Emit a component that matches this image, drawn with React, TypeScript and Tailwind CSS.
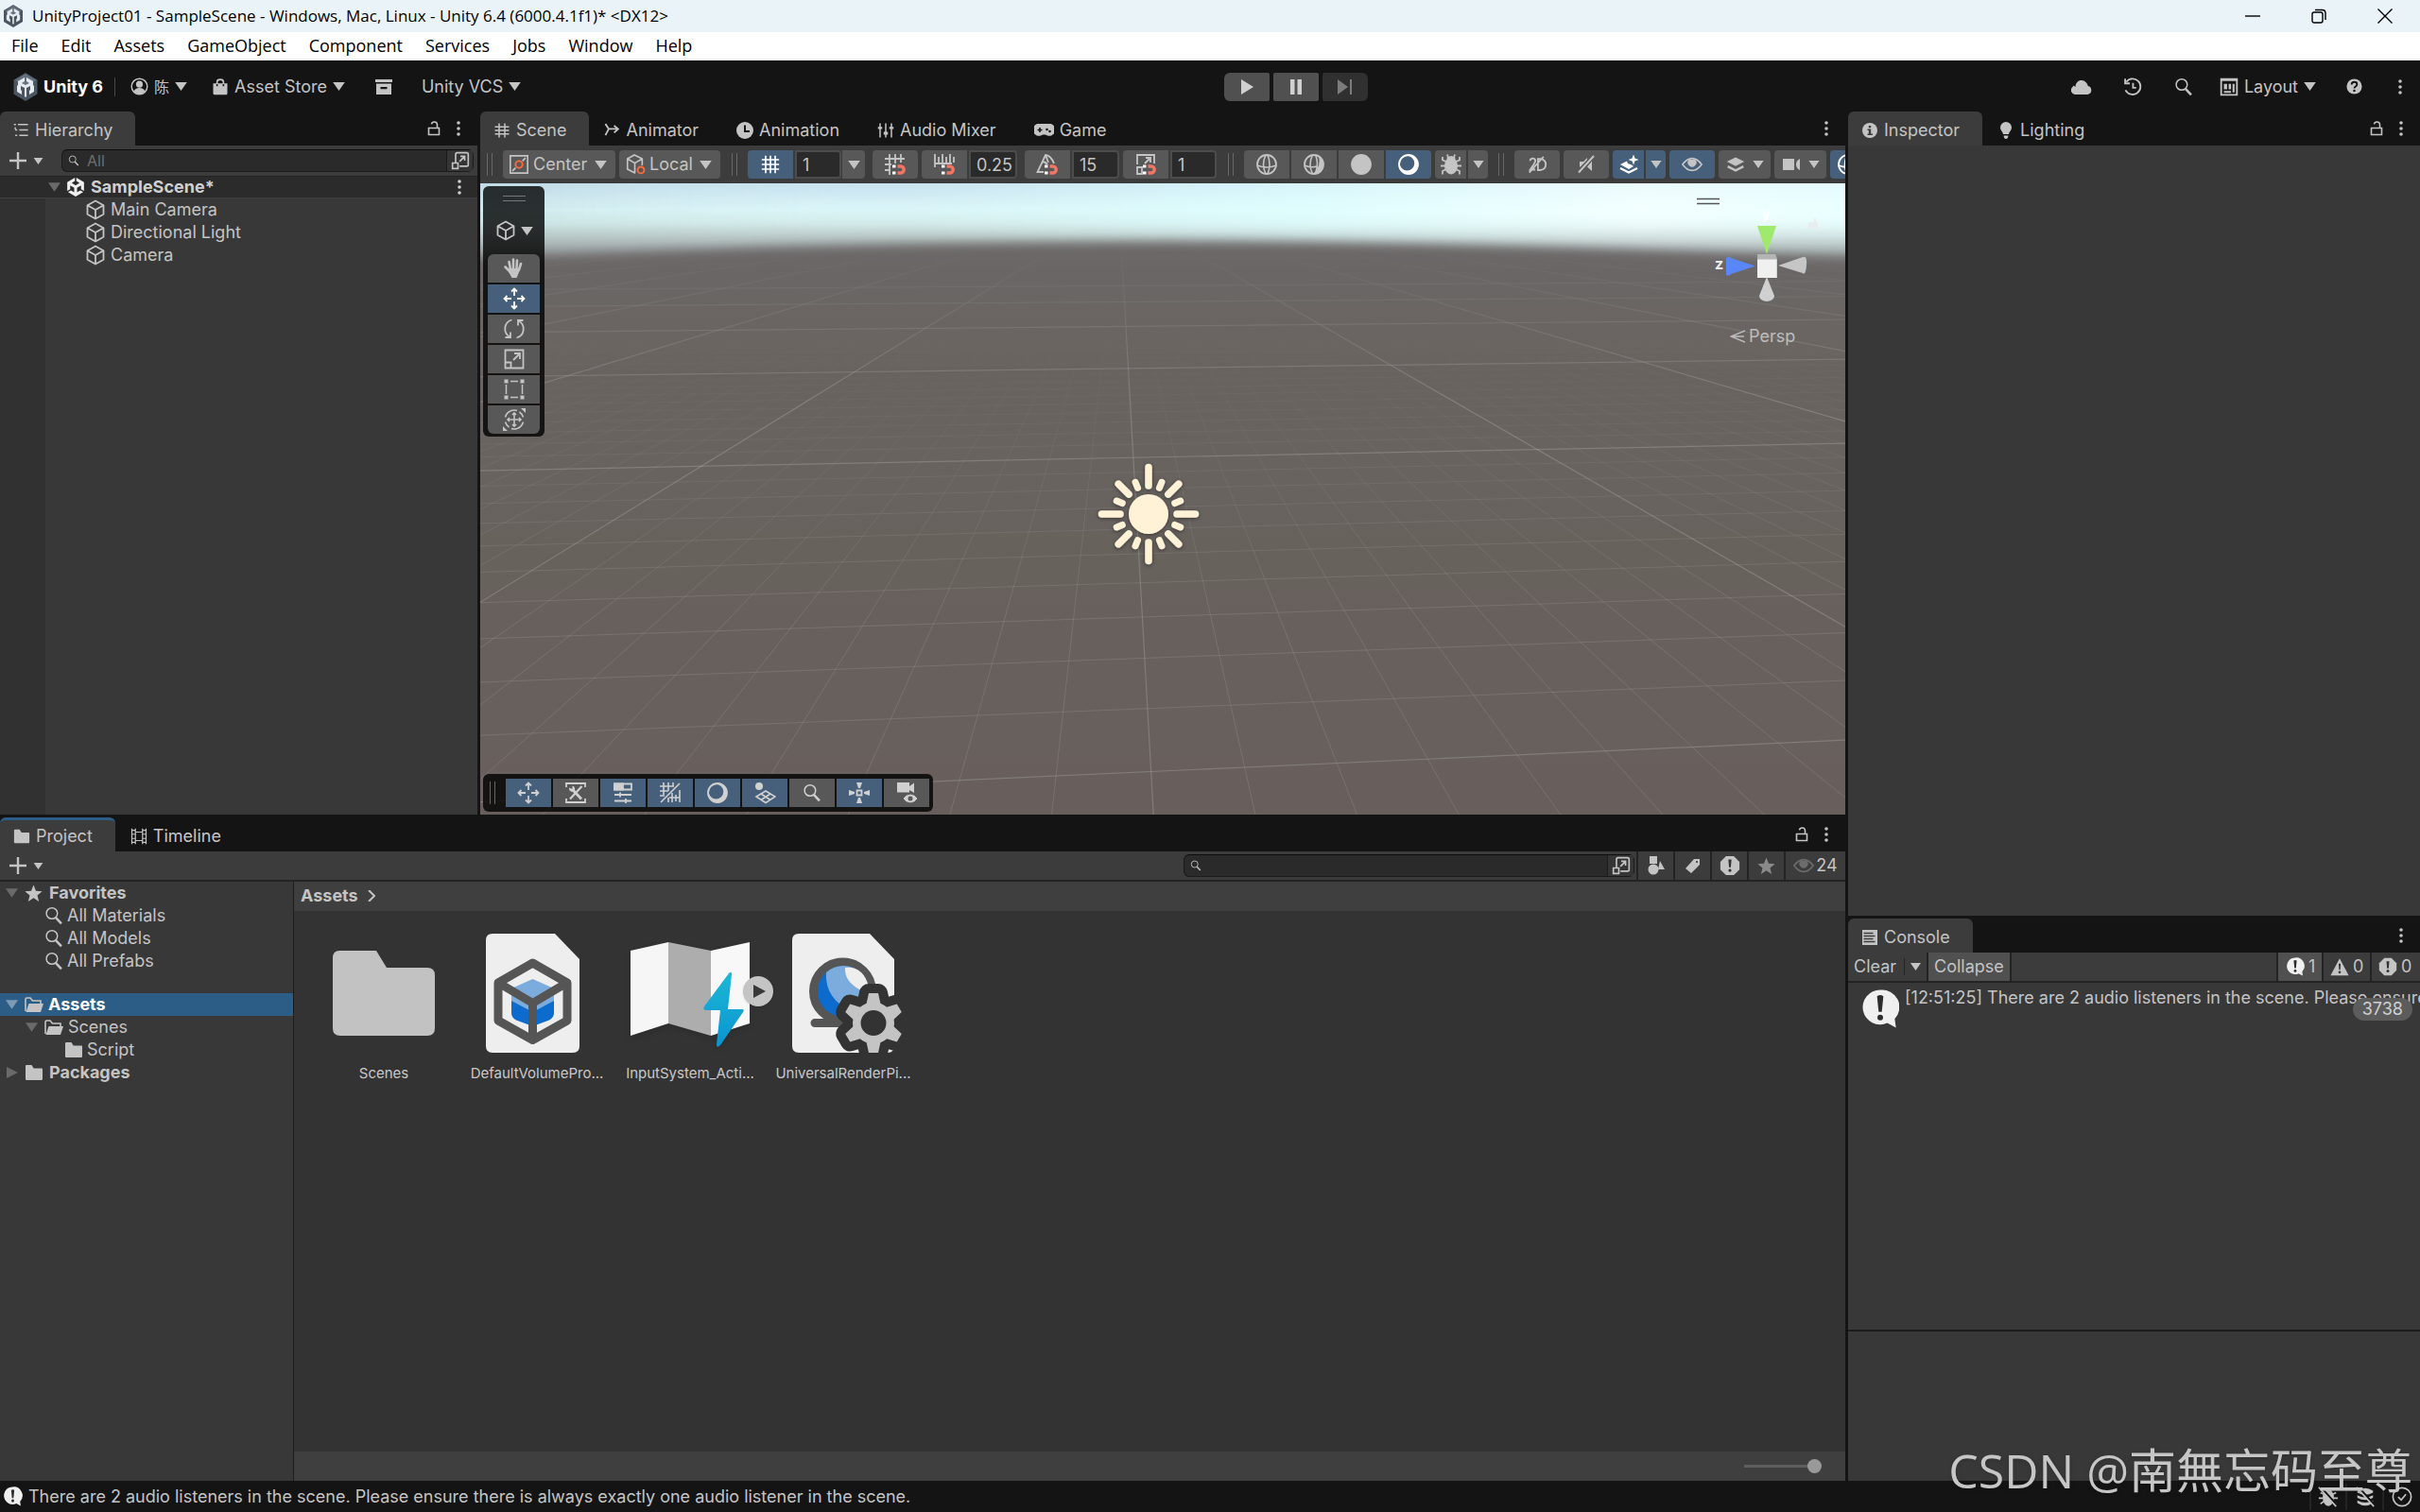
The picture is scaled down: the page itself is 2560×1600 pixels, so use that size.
import React from "react";
import { SiUnity } from "react-icons/si";

interface IconProps {
  className?: string;
  children?: React.ReactNode;
}

const Line = ({ className = "size-5", children }: IconProps) => (
  <svg viewBox="0 0 24 24" fill="none" stroke="currentColor" strokeWidth="1.8" className={`shrink-0 ${className}`} aria-hidden="true">
    {children}
  </svg>
);

const Caret = ({ className = "w-[13px] h-[9px]" }: IconProps) => (
  <svg viewBox="0 0 14 10" fill="currentColor" className={`shrink-0 ${className}`} aria-hidden="true">
    <path d="M0 0h14L7 10z" />
  </svg>
);

const Kebab = () => (
  <svg viewBox="0 0 4 16" fill="currentColor" className="h-4 w-1 shrink-0" aria-hidden="true">
    <circle cx="2" cy="2" r="1.8" />
    <circle cx="2" cy="8" r="1.8" />
    <circle cx="2" cy="14" r="1.8" />
  </svg>
);

const LockIcon = () => (
  <svg viewBox="0 0 16 16" fill="none" stroke="currentColor" strokeWidth="1.6" className="size-4 shrink-0" aria-hidden="true">
    <path d="M2.500 7.500h11v7h-11zM11.500 7.500V4a3 3 0 0 0-3-3c-1.700 0-2.800 1-3 2.300" />
  </svg>
);

const CubeIcon = ({ className = "size-6" }: IconProps) => (
  <Line className={className}>
    <path d="M12 2.500l8.500 4.700v9.600L12 21.500l-8.500-4.700V7.200zM4 7.500l8 4.500 8-4.500M12 12v9" strokeLinejoin="round" />
  </Line>
);

const SearchIcon = ({ className = "size-5" }: IconProps) => (
  <Line className={className}>
    <circle cx="9.500" cy="9" r="7" />
    <path d="M14.500 14.500l7 7.500" strokeWidth="3" />
  </Line>
);

const GridIcon = ({ className = "size-6" }: IconProps) => (
  <Line className={className}>
    <path d="M6.500 2v20M12 2v20M17.500 2v20M2 6.500h20M2 12h20M2 17.500h20" />
  </Line>
);

const HashIcon = () => (
  <Line className="size-[18px]">
    <path d="M8 2v20M16 2v20M2 7h20M2 12h20M2 17h20" strokeWidth="2" />
  </Line>
);

const MoveIcon = ({ className = "size-6" }: IconProps) => (
  <Line className={className}>
    <path d="M12 1.500V9M12 15v7.500M1.500 12H9M15 12h7.500M9 4.500l3-3 3 3M9 19.500l3 3 3-3M4.500 9l-3 3 3 3M19.500 9l3 3-3 3" />
  </Line>
);

const ScaleIcon = () => (
  <Line className="size-6">
    <path d="M2.500 2.500h19v19h-19zM2.500 15.500h6v6M11 13l6.500-6.500M12 6h6v6" />
  </Line>
);

const PopupIcon = () => (
  <Line className="size-5">
    <path d="M6 14V4q0-2 2-2h12q2 0 2 2v13q0 2-2 2h-9M2 15h7v7H2zM11 13l6-6M12 6.500h5.500V12" strokeWidth="2" />
  </Line>
);

const BubbleIcon = ({ className = "size-6" }: IconProps) => (
  <svg viewBox="0 0 24 25" className={`shrink-0 ${className}`} aria-hidden="true">
    <path d="M12 .5a11 11 0 1 0 4.500 21l5.500 3-.8-5.500A11 11 0 0 0 12 .5z" fill="#f0f0f0" />
    <path d="M10 4.500q2-1.500 4 0l-1 10h-2z" fill="#2d2d2d" />
    <circle cx="12" cy="18" r="1.800" fill="#2d2d2d" />
  </svg>
);

const ErrorIcon = ({ className = "size-5" }: IconProps) => (
  <svg viewBox="0 0 24 24" className={`shrink-0 ${className}`} aria-hidden="true">
    <path d="M7.500 1h9L23 7.500v9L16.500 23h-9L1 16.500v-9z" fill="currentColor" />
    <path d="M10.200 5h3.600l-.8 9h-2z" fill="#333" />
    <circle cx="12" cy="17.500" r="1.800" fill="#333" />
  </svg>
);

const WarnIcon = () => (
  <svg viewBox="0 0 24 24" className="size-5 shrink-0" aria-hidden="true">
    <path d="M12 1.500L23.500 23H.5z" fill="currentColor" />
    <path d="M10.700 8h2.600l-.5 8h-1.600z" fill="#333" />
    <circle cx="12" cy="19" r="1.600" fill="#333" />
  </svg>
);

const StarIcon = () => (
  <svg viewBox="0 0 20 20" className="size-[19px] shrink-0" fill="currentColor" aria-hidden="true">
    <path d="M10 .5l2.600 6.500 7 .5-5.400 4.500 1.800 7L10 15l-6 4 1.800-7L.4 7.500l7-.5z" />
  </svg>
);

const EyeIcon = ({ className = "size-6" }: IconProps) => (
  <Line className={className}>
    <path d="M1 12Q6 5 12 5t11 7q-5 7-11 7T1 12z" />
    <path d="M8.200 6.500a5 5 0 1 0 7.600 0z" fill="currentColor" stroke="none" />
  </Line>
);

const BugIcon = ({ className = "size-6" }: IconProps) => (
  <Line className={className}>
    <ellipse cx="12" cy="13.500" rx="7" ry="9" fill="currentColor" stroke="none" />
    <path d="M8 1.500l1 3.500M16 1.500L15 5M7 9L3 7.500V4M17 9l4-1.500V4M6 13.500H1M18 13.500h5M7 17l-4 2v3.500M17 17l4 2v3.500" />
    <path d="M8.500 5.500q3.500-3 7 0v2h-7z" fill="currentColor" />
  </Line>
);

const FolderIcon = ({ className = "size-5" }: IconProps) => (
  <svg viewBox="0 0 20 20" fill="currentColor" className={`shrink-0 ${className}`} aria-hidden="true">
    <path d="M2 2h5.500l2.200 3.500H18q1 0 1 1V17q0 1-1 1H2q-1 0-1-1V3q0-1 1-1z" />
  </svg>
);

const OpenFolderIcon = () => (
  <svg viewBox="0 0 22 20" className="h-5 w-[22px] shrink-0" aria-hidden="true">
    <path d="M2 17V4.500Q2 3 3.500 3H7l2.500 3H18v3" fill="none" stroke="currentColor" strokeWidth="1.600" />
    <path d="M5.500 9H21l-3 9H2.500z" fill="currentColor" />
  </svg>
);

const Magnet = () => (
  <>
    <path d="M14.500 14h3.200a3.200 3.200 0 0 1 0 7h-3.200" stroke="#f27565" strokeWidth="3.400" />
    <path d="M9 14h3.500M9 21h3.500" stroke="#fff" strokeWidth="3" />
  </>
);

const SphereShade = ({ fill }: { fill: "none" | "half" | "full" | "lit" }) => (
  <Line className="size-6">
    <circle cx="12" cy="12" r="10" fill={fill === "full" ? "currentColor" : "none"} />
    {fill === "none" && <path d="M2 13q10 4 20 0M11 2q-5 10 0 20M13 2q4 10 0 20" strokeWidth="1.600" />}
    {fill === "half" && (
      <>
        <path d="M2 13q7 3 13 1M10.500 2q-5 10 0 20M14 3q3 8 0 17" strokeWidth="1.600" />
        <path d="M17 3.500q3 10-6 18.500 11 1 11-10 0-6-5-8.500z" fill="currentColor" stroke="none" />
      </>
    )}
    {fill === "lit" && <path d="M12 2a10 10 0 1 0 0 20 10 10 0 0 0 0-20zM10.500 3a7.500 7.500 0 1 1 0 15.500 7.500 7.500 0 0 1 0-15.500z" fillRule="evenodd" fill="currentColor" stroke="none" />}
  </Line>
);

interface TabProps {
  label: string;
  icon: React.ReactNode;
  active?: boolean;
  focused?: boolean;
}

const Tab = ({ label, icon, active, focused }: TabProps) => (
  <button
    role="tab"
    aria-selected={!!active}
    className={`flex h-9 shrink-0 items-center gap-1.5 border-t-[3px] pl-[14px] pr-6 ${active ? "rounded-t-md bg-[#3c3c3c]" : ""} ${focused ? "border-[#2c5d87]" : "border-transparent"}`}
  >
    {icon}
    {label}
  </button>
);

const TabStrip = ({ children, lock }: { children: React.ReactNode; lock?: boolean }) => (
  <div className="flex h-9 items-center justify-between bg-[#141414]" role="tablist">
    <div className="flex gap-0.5">{children}</div>
    <div className="flex items-center gap-4 pr-[18px]">
      {lock && (
        <button aria-label="Lock">
          <LockIcon />
        </button>
      )}
      <button aria-label="Options">
        <Kebab />
      </button>
    </div>
  </div>
);

const LogoBadge = ({ className }: IconProps) => (
  <svg viewBox="0 0 26 30" className={`shrink-0 ${className}`} aria-hidden="true">
    <path d="M13 0l12.500 7.500v15L13 30 .5 22.500v-15z" fill="#4a5560" />
    <path d="M13 1l11 7-11 7L2 8z" fill="#65727e" />
    <path d="M12 5L5 9v4l-1 1v6l5 3v-4l-1-1v-4l4 2v9l1 1 1-1v-9l4-2v4l-1 1v4l5-3v-6l-1-1V9l-7-4v4l3 2-4 2-4-2 3-2z" fill="#e4eaf0" />
  </svg>
);

const TitleBar = () => (
  <header className="flex h-[34px] items-center bg-[#eaf3f8] font-['Open_Sans','Noto_Sans',sans-serif] text-black">
    <LogoBadge className="ml-[3px] h-6 w-[22px]" />
    <h1 className="ml-[9px] flex-1 text-[17px]">UnityProject01 - SampleScene - Windows, Mac, Linux - Unity 6.4 (6000.4.1f1)* &lt;DX12&gt;</h1>
    <div className="flex items-center gap-[54px] pr-[29px]">
      <button aria-label="Minimize">
        <svg viewBox="0 0 16 16" className="size-4" stroke="currentColor" strokeWidth="1.400">
          <path d="M0 8h16" />
        </svg>
      </button>
      <button aria-label="Restore">
        <svg viewBox="0 0 16 16" className="size-4" fill="none" stroke="currentColor" strokeWidth="1.400">
          <rect x="1" y="4" width="11" height="11" rx="2" />
          <path d="M4 1.500h7.500q3.500 0 3.500 3.500v7" />
        </svg>
      </button>
      <button aria-label="Close">
        <svg viewBox="0 0 16 16" className="size-4" stroke="currentColor" strokeWidth="1.400">
          <path d="M.5.500l15 15M15.500.500l-15 15" />
        </svg>
      </button>
    </div>
  </header>
);

const menus = ["File", "Edit", "Assets", "GameObject", "Component", "Services", "Jobs", "Window", "Help"];

const MenuBar = () => (
  <nav className="flex h-[30px] items-center border-b-2 border-[#f0f0f0] bg-white font-['Open_Sans','Noto_Sans',sans-serif] text-lg/6 text-black">
    {menus.map((menu) => (
      <button key={menu} className="px-3">
        {menu}
      </button>
    ))}
  </nav>
);

const MainToolbar = () => (
  <div className="flex h-[54px] items-center justify-between bg-[#141414] pt-px">
    <div className="flex flex-1 items-center pl-[14px]">
      <LogoBadge className="h-[30px] w-[26px]" />
      <span className="ml-1.5 font-bold text-white">Unity 6</span>
      <div className="mx-3 h-5 w-px bg-[#444]" />
      <button className="ml-1 flex items-center gap-1.5">
        <Line className="size-[19px]">
          <circle cx="12" cy="12" r="10.500" />
          <circle cx="12" cy="9" r="4.500" fill="currentColor" stroke="none" />
          <path d="M4.500 18q3-4 7.500-4t7.500 4q-3 4-7.500 4t-7.500-4z" fill="currentColor" stroke="none" />
        </Line>
        <span className="text-base">陈</span>
        <Caret />
      </button>
      <button className="ml-[26px] flex items-center gap-1.5">
        <Line className="size-[18px]">
          <path d="M2 7h20v14q0 2-2 2H4q-2 0-2-2z" fill="currentColor" stroke="none" />
          <path d="M7.500 10V5q0-3.500 4.500-3.500T16.500 5v5" strokeWidth="2.200" />
          <path d="M7.500 8v3M16.500 8v3" stroke="#141414" strokeWidth="2" />
        </Line>
        Asset Store
        <Caret />
      </button>
      <button className="ml-8" aria-label="Package Manager">
        <svg viewBox="0 0 18 16" className="h-4 w-[18px]" fill="currentColor">
          <path d="M0 0h18v3H0zM1 4.500h16V16H1zM5.500 8v2.200h7V8z" fillRule="evenodd" />
        </svg>
      </button>
      <button className="ml-[31px] flex items-center gap-1.5">
        Unity VCS
        <Caret />
      </button>
    </div>
    <div className="flex gap-1 pl-[186px] text-[#d0d0d0]">
      <button className="flex h-[30px] w-12 items-center justify-center rounded-l-md rounded-r-xs bg-[#505050]" aria-label="Play">
        <svg viewBox="0 0 14 16" className="h-4 w-3.5" fill="currentColor">
          <path d="M1 0l13 8-13 8z" />
        </svg>
      </button>
      <button className="flex h-[30px] w-12 items-center justify-center rounded-xs bg-[#505050]" aria-label="Pause">
        <svg viewBox="0 0 14 16" className="h-4 w-3.5" fill="currentColor">
          <path d="M1 0h4.500v16H1zM8.500 0H13v16H8.500z" />
        </svg>
      </button>
      <button className="flex h-[30px] w-12 items-center justify-center rounded-l-xs rounded-r-md bg-[#303030] text-[#7c7c7c]" aria-label="Step">
        <svg viewBox="0 0 16 16" className="size-4" fill="currentColor">
          <path d="M0 0l11 8-11 8zM13 0h2v16h-2z" />
        </svg>
      </button>
    </div>
    <div className="flex flex-1 items-center justify-end pr-[19px]">
      <button aria-label="Cloud">
        <svg viewBox="0 0 22 16" className="h-4 w-[22px]" fill="currentColor">
          <path d="M4.500 16a4.500 4.500 0 0 1-3-8l1-1.500 2 1.500A6.500 6.500 0 0 1 17 5l.8 2A4.600 4.600 0 0 1 17.500 16z" />
        </svg>
      </button>
      <button className="ml-[33px]" aria-label="Undo History">
        <Line className="size-5">
          <path d="M4 5.500A10 10 0 1 1 3 16M2.500 1.500v6h6M12.500 7v6h4" strokeWidth="2.200" />
        </Line>
      </button>
      <button className="ml-[34px]" aria-label="Search">
        <SearchIcon />
      </button>
      <button className="ml-7 flex items-center gap-1.5">
        <Line className="size-5">
          <path d="M2 2h20v20H2zM2 3.500h20" strokeWidth="2.200" />
          <path d="M5.500 8h4v7h-4zM11.500 8h3v7h-3zM16.500 8H19v11h-2.500zM5.500 17h9v2.500h-9z" fill="currentColor" stroke="none" />
        </Line>
        Layout
        <Caret />
      </button>
      <button className="ml-8" aria-label="Help">
        <svg viewBox="0 0 18 18" className="size-[17px]">
          <circle cx="9" cy="9" r="8.500" fill="currentColor" />
          <path d="M6 7q0-3 3-3t3 2.500Q12 8 10.500 9T9 11.200" fill="none" stroke="#141414" strokeWidth="2" />
          <circle cx="9" cy="13.800" r="1.300" fill="#141414" />
        </svg>
      </button>
      <button className="ml-[38px]" aria-label="More">
        <Kebab />
      </button>
    </div>
  </div>
);

const AddButton = () => (
  <button className="flex items-center gap-[7px] pl-2.5" aria-label="Create">
    <svg viewBox="0 0 18 18" className="size-[18px]" stroke="currentColor" strokeWidth="2.400">
      <path d="M9 0v18M0 9h18" />
    </svg>
    <Caret className="h-[7px] w-[11px]" />
  </button>
);

const SearchBox = ({ className, placeholder, label }: { className: string; placeholder?: string; label: string }) => (
  <div className={`flex h-6 items-center rounded-md border border-[#1b1b1b] border-t-[#0d0d0d] bg-[#2a2a2a] ${className}`}>
    <SearchIcon className="ml-1.5 size-3" />
    <input aria-label={label} placeholder={placeholder} className="h-full min-w-0 flex-1 bg-transparent px-2 text-base outline-none placeholder:text-[#6e6e6e]" />
    <button className="flex h-full w-7 items-center justify-center border-l border-[#1b1b1b] bg-[#353535]" aria-label="Open in Search">
      <PopupIcon />
    </button>
  </div>
);

const Hierarchy = () => (
  <section className="flex min-h-0 flex-col bg-[#383838]">
    <TabStrip lock>
      <Tab
        active
        label="Hierarchy"
        icon={
          <Line className="size-[17px]">
            <path d="M1 4h3M7 4h15M9 12h13M9 20h13M3 8v3M3 12h3M3 20h3" strokeWidth="2.200" />
          </Line>
        }
      />
    </TabStrip>
    <div className="flex h-8 items-center gap-[19px] bg-[#3c3c3c] pr-1">
      <AddButton />
      <SearchBox className="flex-1" placeholder="All" label="Search hierarchy" />
    </div>
    <div className="flex h-6 items-center border-y border-t-[#232323] border-b-[#404040] bg-[#2b2b2b] pl-[51px] pr-[17px] font-bold text-[#d0d0d0]">
      <Caret className="h-3 w-[13px] text-[#6a6a6a]" />
      <SiUnity className="ml-1.5 size-5 text-[#f0f0f0]" />
      <span className="ml-1.5 flex-1">SampleScene*</span>
      <Kebab />
    </div>
    <div className="flex flex-1">
      <div className="w-12 bg-[#313131]" />
      <ul className="flex-1">
        {["Main Camera", "Directional Light", "Camera"].map((name) => (
          <li key={name} className="flex h-6 items-center gap-1 pl-[41px]">
            <CubeIcon />
            {name}
          </li>
        ))}
      </ul>
    </div>
  </section>
);

const Grip = () => (
  <div className="flex h-6 w-1.5 shrink-0 justify-between">
    <div className="w-px bg-[#666]" />
    <div className="w-px bg-[#666]" />
  </div>
);

const tool = "flex h-[30px] shrink-0 items-center justify-center bg-[#585858]";
const toolOn = "flex h-[30px] shrink-0 items-center justify-center bg-[#46607c] text-white";
const picker = "flex h-[30px] shrink-0 items-center gap-1 rounded-sm bg-[#585858] pl-1.5 pr-[9px]";
const field = "h-[30px] shrink-0 rounded-r-sm border-2 border-[#4c4c4c] bg-[#2a2a2a] pl-1.5 outline-none";

const SceneToolbar = () => (
  <div className="flex h-10 items-center overflow-hidden bg-[#3c3c3c] pl-[7px]">
    <Grip />
    <label className={`${picker} ml-[11px] w-[119px]`}>
      <Line className="size-[22px]">
        <path d="M2 2h20v20H2zM16 8l3.500-3.500M4.500 19.500L8 16" />
        <circle cx="12" cy="12" r="4" stroke="#ff6b3d" strokeWidth="2" />
      </Line>
      <select aria-label="Tool handle position" className="min-w-0 flex-1 appearance-none outline-none">
        <option>Center</option>
      </select>
      <Caret />
    </label>
    <label className={`${picker} ml-1 w-[107px]`}>
      <Line className="size-[22px]">
        <path d="M12 22l-9-4.500v-12L11 1l9 4.500V13M3 5.500l8.500 5 8.500-5M11.500 10.500V22" strokeLinejoin="round" />
        <circle cx="18.500" cy="18.500" r="3.800" stroke="#ff6b3d" strokeWidth="2" />
      </Line>
      <select aria-label="Tool handle rotation" className="min-w-0 flex-1 appearance-none outline-none">
        <option>Local</option>
      </select>
      <Caret />
    </label>
    <div className="ml-3">
      <Grip />
    </div>
    <button className={`${toolOn} ml-[11px] w-12 rounded-l-sm`} aria-label="Grid">
      <GridIcon className="size-[22px]" />
    </button>
    <input aria-label="Grid size" defaultValue="1" className={`${field} ml-0.5 w-[49px]`} />
    <button className={`${tool} ml-px w-6 rounded-r-sm`} aria-label="Grid options">
      <Caret />
    </button>
    <div className="mx-1 h-[30px] w-px bg-[#555]" />
    <button className={`${tool} w-12 rounded-sm`} aria-label="Grid snapping">
      <Line className="size-6">
        <path d="M6 1v22M12 1v10M18 1v9M1 6h21M1 12h7M1 18h6" />
        <Magnet />
      </Line>
    </button>
    <button className={`${tool} ml-1 w-12 rounded-l-sm`} aria-label="Increment snapping">
      <Line className="size-6">
        <path d="M2 1v14M2 11h7M6 4v7M10 1v10M14 4v7M18 1v9M22 4v6M9 11h11" />
        <Magnet />
      </Line>
    </button>
    <input aria-label="Move increment" defaultValue="0.25" className={`${field} ml-0.5 w-[51px]`} />
    <div className="mx-1 h-[30px] w-px bg-[#555]" />
    <button className={`${tool} w-12 rounded-l-sm`} aria-label="Angle snapping">
      <Line className="size-6">
        <path d="M8 20H1.500L10 2q6 1 9 9M10 2l3 8M6 9q4 0 6 3" />
        <Magnet />
      </Line>
    </button>
    <input aria-label="Rotate increment" defaultValue="15" className={`${field} ml-0.5 w-[50px]`} />
    <button className={`${tool} ml-1 w-12 rounded-l-sm`} aria-label="Scale snapping">
      <Line className="size-6">
        <path d="M3 12V2h18v9M3 15h5v7H3zM11 11l5-5M12 5h5v5" />
        <Magnet />
      </Line>
    </button>
    <input aria-label="Scale increment" defaultValue="1" className={`${field} ml-0.5 w-[49px]`} />
    <div className="ml-3">
      <Grip />
    </div>
    <div className="ml-[11px] flex shrink-0 gap-0.5">
      <button className={`${tool} w-12 rounded-l-sm`} aria-label="Wireframe">
        <SphereShade fill="none" />
      </button>
      <button className={`${tool} w-12`} aria-label="Shaded wireframe">
        <SphereShade fill="half" />
      </button>
      <button className={`${tool} w-12`} aria-label="Unlit">
        <SphereShade fill="full" />
      </button>
      <button className={`${toolOn} w-12 rounded-r-sm`} aria-label="Shaded">
        <SphereShade fill="lit" />
      </button>
    </div>
    <button className={`${tool} ml-1 w-[33px] rounded-l-sm`} aria-label="Debug draw mode">
      <BugIcon />
    </button>
    <button className={`${tool} ml-0.5 w-[21px] rounded-r-sm`} aria-label="Debug options">
      <Caret className="h-2 w-3" />
    </button>
    <div className="ml-[11px]">
      <Grip />
    </div>
    <button className={`${tool} ml-[11px] w-12 rounded-sm`} aria-label="2D view">
      <Line className="size-[22px]">
        <path d="M4 8q0-3 3-3t3 3q0 2-6 10h6M13 5.500h3q6 1 6 6.500t-6 6.500h-3zM19.500 3L3 21.500" strokeWidth="2" />
      </Line>
    </button>
    <button className={`${tool} ml-1 w-12 rounded-sm`} aria-label="Audio">
      <Line className="size-6">
        <path d="M20 3L4 20.500" strokeWidth="2" />
        <path d="M5 9h4l4-4v2L6 14.500H5zM18 8.500V19l-5-4.500z" fill="currentColor" stroke="none" />
      </Line>
    </button>
    <button className={`${toolOn} ml-1 w-[33px] rounded-l-sm`} aria-label="Effects">
      <Line className="size-6">
        <path d="M3 12l7-3.500 1 2.500 4 1.500 2 1.500-5 3z" fill="currentColor" stroke="none" />
        <path d="M3 16l9 4.500 9-4.500" strokeWidth="2.200" />
        <path d="M17 1.500l1.500 4 4 1.500-4 1.500-1.500 4-1.500-4-4-1.500 4-1.500z" fill="currentColor" stroke="none" />
      </Line>
    </button>
    <button className={`${toolOn} ml-0.5 w-[21px] rounded-r-sm`} aria-label="Effects options">
      <Caret className="h-2 w-3 text-[#c4c4c4]" />
    </button>
    <button className={`${toolOn} ml-1 w-12 rounded-sm`} aria-label="Scene visibility">
      <EyeIcon className="size-[22px] text-[#c4c4c4]" />
    </button>
    <button className={`${tool} ml-1 w-[55px] gap-2 rounded-sm`} aria-label="Layers">
      <Line className="size-5">
        <path d="M1 8.500L12 3l11 5.500L12 14z" fill="currentColor" stroke="none" />
        <path d="M2 14.500l10 5 10-5" strokeWidth="3" />
      </Line>
      <Caret className="h-2 w-3" />
    </button>
    <button className={`${tool} ml-1 w-[55px] gap-2 rounded-sm`} aria-label="Camera settings">
      <svg viewBox="0 0 20 14" className="h-3.5 w-5" fill="currentColor">
        <path d="M1 1h12v12H1zM19 1v12q-4-2-4-6t4-6z" />
      </svg>
      <Caret className="h-2 w-3" />
    </button>
    <button className={`${toolOn} ml-1 w-[37px] rounded-sm`} aria-label="Gizmos">
      <SphereShade fill="none" />
    </button>
  </div>
);

// One vanishing point per axis; every tenth line is drawn stronger.
const VX = 676;
const VY = 27;
const rays = Array.from({ length: 121 }, (_, i) => i - 60);
const rows = Array.from({ length: 61 }, (_, i) => i - 1);

const SceneView = () => (
  <svg viewBox="0 0 1444 668" preserveAspectRatio="xMidYMin slice" className="absolute inset-0 size-full" role="img" aria-label="Scene">
    <defs>
      <linearGradient id="sky" x1="0" x2="0" y1="0" y2="1">
        <stop offset="0" stopColor="#c8e2f0" />
        <stop offset=".28" stopColor="#dbf6f8" />
        <stop offset=".42" stopColor="#d3ebea" />
        <stop offset=".6" stopColor="#b4c1c0" />
        <stop offset=".85" stopColor="#7f7f80" />
        <stop offset="1" stopColor="#6c6869" />
      </linearGradient>
      <linearGradient id="glow" x1="0" x2="1" y1="0" y2="0">
        <stop offset="0" stopColor="#8aa0a8" stopOpacity=".15" />
        <stop offset=".3" stopColor="#e0ffff" stopOpacity="0" />
        <stop offset=".6" stopColor="#e0ffff" stopOpacity=".8" />
        <stop offset=".85" stopColor="#f4ffff" />
        <stop offset="1" stopColor="#eaffff" />
      </linearGradient>
      <linearGradient id="glowFade" x1="0" x2="0" y1="0" y2="1">
        <stop offset="0" stopColor="#ccc" />
        <stop offset=".4" stopColor="#fff" />
        <stop offset=".6" stopColor="#aaa" />
        <stop offset="1" stopColor="#000" />
      </linearGradient>
      <linearGradient id="ground" gradientUnits="userSpaceOnUse" x1="0" x2="0" y1="60" y2="668">
        <stop offset="0" stopColor="#6c6768" />
        <stop offset=".25" stopColor="#69645f" />
        <stop offset="1" stopColor="#675f5b" />
      </linearGradient>
      <linearGradient id="fade" gradientUnits="userSpaceOnUse" x1="0" x2="0" y1="65" y2="230">
        <stop offset="0" stopColor="#fff" stopOpacity="0" />
        <stop offset="1" stopColor="#fff" />
      </linearGradient>
      <linearGradient id="fadeMinor" gradientUnits="userSpaceOnUse" x1="0" x2="0" y1="150" y2="460">
        <stop offset="0" stopColor="#fff" stopOpacity="0" />
        <stop offset="1" stopColor="#fff" />
      </linearGradient>
      <mask id="glowMask">
        <rect width="1444" height="78" fill="url(#glowFade)" />
      </mask>
      <mask id="majorMask">
        <rect width="1444" height="668" fill="url(#fade)" />
      </mask>
      <mask id="minorMask">
        <rect width="1444" height="668" fill="url(#fadeMinor)" />
      </mask>
      <filter id="fog" x="-5%" y="-10%" width="110%" height="120%">
        <feGaussianBlur stdDeviation="6" />
      </filter>
      <filter id="sunShadow" x="-30%" y="-30%" width="160%" height="160%">
        <feDropShadow dx="0" dy="1" stdDeviation="2" floodOpacity=".5" />
      </filter>
    </defs>
    <rect width="1444" height="100" fill="url(#sky)" />
    <rect width="1444" height="78" fill="url(#glow)" mask="url(#glowMask)" />
    <path d="M-60 84Q300 64 676 62T1504 84V760H-60z" fill="url(#ground)" filter="url(#fog)" />
    <g mask="url(#minorMask)" stroke="#a0a0a0" strokeOpacity=".28">
      {rays.map((k) => k % 10 !== 0 && <line key={`v${k}`} x1={VX} y1={VY} x2={VX + (0.0565 + 0.168 * k) * 700} y2={VY + 700} />)}
      {rows.map((j) => {
        const d = 1 / (0.001675 + 0.000212 * j);
        return j % 10 !== 0 && <line key={`h${j}`} x1="0" x2="1444" y1={VY + d * (1 + 0.000076 * VX)} y2={VY + d * (1 - 0.000076 * (1444 - VX))} />;
      })}
    </g>
    <g mask="url(#majorMask)" stroke="#a4a4a4" strokeOpacity=".42" strokeWidth="1.200">
      {rays.map((k) => k % 10 === 0 && <line key={`v${k}`} x1={VX} y1={VY} x2={VX + (0.0565 + 0.168 * k) * 700} y2={VY + 700} />)}
      {rows.map((j) => {
        const d = 1 / (0.001675 + 0.000212 * j);
        return j % 10 === 0 && <line key={`h${j}`} x1="0" x2="1444" y1={VY + d * (1 + 0.000076 * VX)} y2={VY + d * (1 - 0.000076 * (1444 - VX))} />;
      })}
    </g>
    <g transform="translate(707 350)" fill="#fff2d6" stroke="#fff2d6" strokeWidth="7.500" strokeLinecap="round" filter="url(#sunShadow)">
      <circle r="21" stroke="none" />
      {[0, 90, 180, 270].map((a) => (
        <line key={a} y1="-30" y2="-49.500" transform={`rotate(${a})`} />
      ))}
      {[45, 135, 225, 315].map((a) => (
        <line key={a} y1="-29.500" y2="-45" transform={`rotate(${a})`} />
      ))}
      {[22.5, 67.5, 112.5, 157.5, 202.5, 247.5, 292.5, 337.5].map((a) => (
        <line key={a} y1="-30" y2="-36.500" strokeWidth="7" transform={`rotate(${a})`} />
      ))}
    </g>
  </svg>
);

const OrientationGizmo = () => (
  <div className="absolute right-[27px] top-[11px] text-[#bdbdbd]">
    <svg viewBox="0 0 135 120" className="h-[120px] w-[135px]" aria-label="Orientation">
      <path d="M5 5.500h24M5 10.500h24" stroke="#555" strokeWidth="1.600" />
      <text x="78" y="27" textAnchor="middle" fill="#fff" className="text-base font-bold">
        y
      </text>
      <path d="M123 30h10v7h-10zM131 30v-4h-2v4z" fill="#e8eef0" />
      <path d="M69 34h20L79 64z" fill="#9fea6c" />
      <path d="M69 64h19l2 5v20H69z" fill="#b4b4b4" />
      <path d="M69 69.500h20.500V89H69z" fill="#f0f0f0" />
      <text x="24" y="80" fill="#eee" className="text-base font-bold">
        z
      </text>
      <path d="M36 68q4-3 5 0l26 8.500-26 8.500q-2 3-5 1z" fill="#5a87f7" />
      <path d="M91 76l26-9q5-2 4 9t-4 8z" fill="#c6c6c6" />
      <path d="M79 88l8 20q0 5-8 6-8-1-8-6z" fill="#d0d0d0" />
    </svg>
    <button className="ml-9 mt-[19px] flex h-6 items-center gap-1 pl-1">
      <svg viewBox="0 0 16 14" className="h-3.5 w-4" fill="none" stroke="currentColor" strokeWidth="1.400">
        <path d="M16 1L1 7l15 6M1 7h14" />
      </svg>
      Persp
    </button>
  </div>
);

const ToolPalette = () => (
  <div className="absolute left-[3px] top-[3px] flex w-[65px] flex-col items-center gap-0.5 rounded-md bg-black/80 pb-[3px] pt-2.5">
    <div className="flex h-1.5 w-6 flex-col justify-between">
      <div className="h-px bg-[#777]" />
      <div className="h-px bg-[#777]" />
    </div>
    <button className="flex h-[52px] items-center gap-1 pt-1.5" aria-label="Tool context">
      <CubeIcon />
      <Caret />
    </button>
    <button className={`${tool} w-[55px] rounded-t-md`} aria-label="View">
      <svg viewBox="0 0 24 24" className="size-6" fill="none" stroke="currentColor" strokeWidth="2.600" strokeLinecap="round">
        <path d="M8 13L6.500 5M11 12V2.500M14.500 12l.5-8.500M17 13.500l2-6.500M8 16L2.500 10.500" />
        <path d="M7 12h10.500v3l-3 7h-5L6 15.500z" fill="currentColor" stroke="none" />
      </svg>
    </button>
    <button className={`${toolOn} w-[55px]`} aria-label="Move">
      <MoveIcon />
    </button>
    <button className={`${tool} w-[55px]`} aria-label="Rotate">
      <Line className="size-6">
        <path d="M9.500 2.500a9.700 9.700 0 0 0-2 18M14.500 21.500a9.700 9.700 0 0 0 2-18M8 15.500v5.500H2.500M16 8.500V3h5.500" />
      </Line>
    </button>
    <button className={`${tool} w-[55px]`} aria-label="Scale">
      <ScaleIcon />
    </button>
    <button className={`${tool} w-[55px]`} aria-label="Rect">
      <Line className="size-6">
        <path d="M3.500 7v10M20.500 7v10M8 3.500h8M8 20.500h8" strokeWidth="1.500" />
        <path d="M1.500 1.500h4v4h-4zM18.500 1.500h4v4h-4zM1.500 18.500h4v4h-4zM18.500 18.500h4v4h-4z" fill="currentColor" stroke="none" />
      </Line>
    </button>
    <button className={`${tool} w-[55px] rounded-b-md`} aria-label="Transform">
      <Line className="size-6">
        <path d="M12 5v14M5 12h14M10 7l2-2 2 2M10 17l2 2 2-2M7 10l-2 2 2 2M17 10l2 2-2 2" strokeWidth="1.600" />
        <path d="M9 2.500a10 10 0 0 0-6.500 7M2.500 14.500a10 10 0 0 0 4 5.500M15 21.500a10 10 0 0 0 6.500-7M21.500 9.500a10 10 0 0 0-4-5.500M15 2.500a10 10 0 0 0-6 0M9 21.500a10 10 0 0 0 6 0" strokeWidth="1.600" />
        <path d="M19 0h5v5zM0 19v5h5z" fill="currentColor" stroke="none" />
      </Line>
    </button>
  </div>
);

const overlays = [
  { name: "Tools", on: true, icon: <MoveIcon className="size-6" /> },
  {
    name: "Tool Settings",
    on: false,
    icon: (
      <Line className="size-6">
        <path d="M2 6V2h20v4M2 18v4h20v-4" />
        <path d="M9 9l9 9.500" strokeWidth="2.800" />
        <path d="M18.500 5L6 18.500" strokeWidth="2.200" />
        <path d="M5 6.500A3.500 3.500 0 0 0 10.500 10 3.500 3.500 0 0 0 8.500 4.500V7.500H7z" fill="currentColor" stroke="none" />
      </Line>
    ),
  },
  {
    name: "View Options",
    on: true,
    icon: (
      <Line className="size-6">
        <path d="M3 2.500h18v6H3z" />
        <path d="M3 2.500h9v6H3z" fill="currentColor" />
        <path d="M3 14h18M3 20.500h18M9 11.500v5M15 18v5" />
      </Line>
    ),
  },
  {
    name: "Grid and Snap",
    on: true,
    icon: (
      <Line className="size-6">
        <path d="M2 22L22 2M5 1v13M10 1v9M15 1v4M1 5h15M1 10h9M1 15h5M22 9v13M18 14v7M14 12v10M10 17v5M11 17h11" strokeWidth="1.600" />
      </Line>
    ),
  },
  { name: "Draw Modes", on: true, icon: <SphereShade fill="lit" /> },
  {
    name: "Camera Overlays",
    on: true,
    icon: (
      <Line className="size-6">
        <circle cx="6" cy="5" r="4" fill="currentColor" stroke="none" />
        <path d="M13 10l10 6-10 6.500L3 16zM8 13l10 6.500M18 13L8 19.500" strokeWidth="1.600" />
      </Line>
    ),
  },
  { name: "Search", on: false, icon: <SearchIcon className="size-5" /> },
  {
    name: "Orientation",
    on: true,
    icon: (
      <Line className="size-6">
        <path d="M9.500 9.500h5v5h-5z" />
        <path d="M9 1h6l-2 6h-2zM9 23h6l-2-6h-2zM1 9v6l6-2v-2zM23 9v6l-6-2v-2z" fill="currentColor" stroke="none" />
      </Line>
    ),
  },
  {
    name: "Cameras",
    on: false,
    icon: (
      <Line className="size-6">
        <path d="M2 1h13v4l5-3.500V12l-5-3v2.500H2z" fill="currentColor" stroke="none" />
        <path d="M8 18q3.500-5 8-5t8 5q-3.500 5-8 5t-8-5z" fill="currentColor" stroke="#585858" strokeWidth="1" />
        <circle cx="16" cy="18" r="2.500" fill="#585858" stroke="none" />
      </Line>
    ),
  },
];

const OverlayBar = () => (
  <div className="absolute bottom-[3px] left-[3px] flex h-10 items-center gap-0.5 rounded-md bg-black/80 pl-[7px] pr-1">
    <Grip />
    <div className="w-[7px]" />
    {overlays.map(({ name, on, icon }) => (
      <button key={name} aria-label={name} aria-pressed={on} className={`${on ? toolOn : tool} w-12`}>
        <span className="text-[#d0d0d0]">{icon}</span>
      </button>
    ))}
  </div>
);

const Scene = () => (
  <section className="flex min-h-0 min-w-0 flex-col bg-[#383838]">
    <TabStrip>
      <Tab active label="Scene" icon={<HashIcon />} />
      <Tab
        label="Animator"
        icon={
          <Line className="size-[17px]">
            <path d="M2 3l5 7.500h14M2 20l5-9.500M15 5.500l6 5-6 5.500" strokeWidth="2.600" />
          </Line>
        }
      />
      <Tab
        label="Animation"
        icon={
          <svg viewBox="0 0 18 18" className="size-[18px]">
            <circle cx="9" cy="9" r="9" fill="currentColor" />
            <path d="M9 3.500V10h5" fill="none" stroke="#141414" strokeWidth="2" />
          </svg>
        }
      />
      <Tab
        label="Audio Mixer"
        icon={
          <Line className="size-[18px]">
            <path d="M4 2v20M12 2v20M20 2v20" strokeWidth="2" />
            <path d="M1 7h6v3H1zM9 14h6v4H9zM17 7h6v3h-6z" fill="currentColor" stroke="none" />
          </Line>
        }
      />
      <Tab
        label="Game"
        icon={
          <svg viewBox="0 0 21 13" className="h-[13px] w-[21px]">
            <path d="M6.500 0h8a6.500 6.500 0 1 1-2.500 11.500H9A6.500 6.500 0 1 1 6.500 0z" fill="currentColor" />
            <path d="M6 4v5M3.500 6.500h5" stroke="#141414" strokeWidth="1.600" />
            <circle cx="13.500" cy="6" r="1.300" fill="#141414" />
            <circle cx="16.500" cy="8" r="1.300" fill="#141414" />
          </svg>
        }
      />
    </TabStrip>
    <SceneToolbar />
    <div className="relative min-h-0 flex-1 overflow-hidden">
      <SceneView />
      <ToolPalette />
      <OrientationGizmo />
      <OverlayBar />
    </div>
  </section>
);

const DocShape = ({ width }: { width: number }) => <path d={`M7 0H${width - 26}L${width} 27V119q0 7-7 7H7q-7 0-7-7V7Q0 0 7 0z`} fill="#eee" />;

const FolderThumb = () => (
  <svg viewBox="0 0 108 90" className="h-[90px] w-[108px]">
    <path d="M7 0H46L57 18H100q8 0 8 8V82q0 8-8 8H8q-8 0-8-8V8Q0 0 7 0z" fill="#c2c2c2" />
  </svg>
);

const VolumeThumb = () => (
  <svg viewBox="0 0 108 126" className="h-[126px] w-[108px]">
    <DocShape width={99} />
    <path d="M49.500 48L72 58V76L49.500 88 27 76V58z" fill="#7cacdd" />
    <path d="M27 71l22.500 12L72 71v13q0 5-5 7.500L49.500 98 32 91.500q-5-2.500-5-7.500z" fill="#0d6bcd" />
    <path d="M49.500 31L86 52v40l-36.500 20.500L13 92V52zM15 53l34.500 20.500L84 53M49.500 73v39" fill="none" stroke="#555" strokeWidth="9" strokeLinejoin="round" />
  </svg>
);

const InputThumb = () => (
  <svg viewBox="0 0 126 126" className="h-[126px] w-[126px] overflow-visible drop-shadow-md">
    <defs>
      <linearGradient id="bolt" x1="0" x2="0" y1="0" y2="1">
        <stop offset="0" stopColor="#1cb8d4" />
        <stop offset="1" stopColor="#0a94d2" />
      </linearGradient>
    </defs>
    <path d="M0 18l40-9v86L0 108z" fill="#f6f6f6" />
    <path d="M40 9l45 9v90L40 95z" fill="#adadad" />
    <path d="M85 18l41-9v86l-41 13z" fill="#f8f8f8" />
    <path d="M104 42q3-3 3 1l-4 37h15q3 0 1 3L95 118q-4 4-4-1l4-36H80q-4 0-2-4z" fill="url(#bolt)" />
  </svg>
);

const RendererThumb = () => (
  <svg viewBox="0 0 108 126" className="h-[126px] w-[108px] overflow-visible">
    <DocShape width={108} />
    <circle cx="53.500" cy="61" r="31" fill="#0d6bcd" stroke="#555" strokeWidth="9" />
    <path d="M36 41q8-7 18-7 16 0 24 16 3 8 2 18L66 84Q34 70 36 41z" fill="#7cacdd" />
    <path d="M56 36q19-2 25 20-1 7-10 3-16-9-15-23z" fill="#eee" />
    <path d="M24 94.500h34M53.500 92a31 31 0 0 0 31-31" fill="none" stroke="#555" strokeWidth="9" strokeLinecap="round" />
    <g transform="translate(86 94.500)">
      {["#333", "#c4c4c4"].map((color) => (
        <g key={color} fill={color} stroke={color} strokeLinejoin="round" strokeWidth={color === "#333" ? 20 : 0}>
          <circle r="22" />
          {[0, 60, 120, 180, 240, 300].map((a) => (
            <path key={a} d="M-5-31.500H5L8-18H-8z" transform={`rotate(${a})`} />
          ))}
        </g>
      ))}
      <circle r="13.500" fill="#333" />
    </g>
  </svg>
);

const assets = [
  { name: "Scenes", thumb: <FolderThumb /> },
  { name: "DefaultVolumePro...", thumb: <VolumeThumb /> },
  { name: "InputSystem_Acti...", thumb: <InputThumb />, expandable: true },
  { name: "UniversalRenderPi...", thumb: <RendererThumb /> },
];

const searches = ["All Materials", "All Models", "All Prefabs"];
const filterButton = "flex h-full items-center justify-center border-l-2 border-[#232323]";

const Project = () => (
  <section className="flex min-h-0 flex-col bg-[#333]">
    <TabStrip lock>
      <Tab active focused label="Project" icon={<FolderIcon className="size-[18px]" />} />
      <Tab
        label="Timeline"
        icon={
          <Line className="size-[18px]">
            <path d="M2 1v22M7 1v22M17 1v22M22 1v22M7 6h10M7 18h10M2 3.500h5M2 9h5M2 15h5M2 20.500h5M17 3.500h5M17 9h5M17 15h5M17 20.500h5" strokeWidth="1.600" />
          </Line>
        }
      />
    </TabStrip>
    <div className="flex h-8 items-center justify-between border-b-2 border-[#232323] bg-[#3c3c3c]">
      <AddButton />
      <div className="flex h-full items-center">
        <SearchBox className="mr-0.5 w-[477px]" label="Search assets" />
        <button className={`${filterButton} w-[39px]`} aria-label="Search by type">
          <svg viewBox="0 0 20 20" className="size-5" fill="currentColor">
            <path d="M3 0h8v8H3zM14 5l5 9h-7z" />
            <circle cx="7" cy="14" r="5.500" />
          </svg>
        </button>
        <button className={`${filterButton} w-[39px]`} aria-label="Search by label">
          <svg viewBox="0 0 20 20" className="size-5" fill="currentColor">
            <path d="M11 3h6v6L8 18l-6-5zM14 5a1 1 0 1 0 .1 2.100A1 1 0 0 0 14 5z" fillRule="evenodd" />
          </svg>
        </button>
        <button className={`${filterButton} w-[39px]`} aria-label="Search by import log">
          <ErrorIcon className="size-[22px]" />
        </button>
        <button className={`${filterButton} w-[39px] text-[#8a8a8a]`} aria-label="Save search">
          <StarIcon />
        </button>
        <button className={`${filterButton} w-[65px] gap-0.5`} aria-label="Hidden packages">
          <EyeIcon className="size-[22px] text-[#6c6c6c]" />
          24
        </button>
      </div>
    </div>
    <div className="flex min-h-0 flex-1">
      <nav className="w-[310px] shrink-0 bg-[#383838]">
        <div className="flex h-6 items-center gap-[7px] pl-1.5 font-bold">
          <Caret className="h-3 w-[13px] text-[#6a6a6a]" />
          <StarIcon />
          Favorites
        </div>
        {searches.map((name) => (
          <div key={name} className="flex h-6 items-center gap-1 pl-[47px]">
            <SearchIcon />
            {name}
          </div>
        ))}
        <div className="mt-[22px] flex h-6 items-center gap-1 bg-[#2c5d87] pl-1.5 font-bold text-white">
          <Caret className="mr-0.5 h-3 w-[13px] text-[#7d9ab4]" />
          <span className="text-[#c4c4c4]">
            <OpenFolderIcon />
          </span>
          Assets
        </div>
        <div className="flex h-6 items-center gap-1 pl-[27px]">
          <Caret className="mr-0.5 h-3 w-[13px] text-[#6a6a6a]" />
          <OpenFolderIcon />
          Scenes
        </div>
        <div className="flex h-6 items-center gap-1 pl-[68px]">
          <FolderIcon />
          Script
        </div>
        <div className="flex h-6 items-center gap-1.5 pl-1.5 font-bold">
          <svg viewBox="0 0 14 14" className="size-3.5 text-[#6a6a6a]" fill="currentColor">
            <path d="M1 1l12 6-12 6z" />
          </svg>
          <FolderIcon />
          Packages
        </div>
      </nav>
      <div className="flex min-w-0 flex-1 flex-col border-l border-[#1c1c1c]">
        <div className="flex h-[31px] shrink-0 items-center gap-2.5 bg-[#3f3f3f] pb-0.5 pl-[7px] font-bold">
          Assets
          <svg viewBox="0 0 8 12" className="h-3 w-2" fill="none" stroke="currentColor" strokeWidth="2">
            <path d="M1 0l6 6-6 6" />
          </svg>
        </div>
        <div className="flex flex-1 flex-wrap content-start px-3.5 pt-[15px]">
          {assets.map(({ name, thumb, expandable }) => (
            <figure key={name} className="relative w-[162px]">
              <div className="flex h-36 items-center justify-center">{thumb}</div>
              <figcaption className="text-center text-[15px]/[26px] text-[#c8c8c8]">{name}</figcaption>
              {expandable && (
                <button className="absolute right-[-7px] top-[54px] flex size-8 items-center justify-center rounded-full bg-[#c4c4c4] text-[#383838] shadow" aria-label="Expand">
                  <svg viewBox="0 0 14 14" className="ml-1 size-3.5" fill="currentColor">
                    <path d="M0 0l13 7-13 7z" />
                  </svg>
                </button>
              )}
            </figure>
          ))}
        </div>
        <div className="flex h-[31px] shrink-0 items-center justify-end bg-[#3f3f3f] pr-[25px]">
          <input type="range" aria-label="Icon size" defaultValue="100" className="h-4 w-[82px] appearance-none bg-transparent [&::-webkit-slider-runnable-track]:h-[3px] [&::-webkit-slider-runnable-track]:bg-[#5e5e5e] [&::-webkit-slider-thumb]:-mt-1.5 [&::-webkit-slider-thumb]:size-[15px] [&::-webkit-slider-thumb]:appearance-none [&::-webkit-slider-thumb]:rounded-full [&::-webkit-slider-thumb]:bg-[#999]" />
        </div>
      </div>
    </div>
  </section>
);

const Inspector = () => (
  <section className="flex min-h-0 flex-col bg-[#383838]">
    <TabStrip lock>
      <Tab
        active
        label="Inspector"
        icon={
          <svg viewBox="0 0 16 16" className="mx-px size-4">
            <circle cx="8" cy="8" r="8" fill="currentColor" />
            <path d="M5.500 6.500h3.700v5H11v1.500H5.500v-1.500h1.300V8H5.500zM6.800 3h2.400v2.300H6.800z" fill="#3c3c3c" />
          </svg>
        }
      />
      <Tab
        label="Lighting"
        icon={
          <svg viewBox="0 0 18 18" className="size-[18px]" fill="currentColor">
            <path d="M9 0a6 6 0 0 1 6 6c0 3-2.500 4-3 7H6c-.5-3-3-4-3-7a6 6 0 0 1 6-6zM6.500 14.500h5q-.5 3.500-2.500 3.500t-2.500-3.500z" />
          </svg>
        }
      />
    </TabStrip>
  </section>
);

const Console = () => (
  <section className="flex min-h-0 min-w-0 flex-col bg-[#383838]">
    <TabStrip>
      <Tab
        active
        label="Console"
        icon={
          <svg viewBox="0 0 16 16" className="mx-px size-4">
            <path d="M0 0h16v16H0z" fill="currentColor" />
            <path d="M1.500 3.500h10M1.500 6.500h12M1.500 9.500h10M1.500 12.500h12" stroke="#3c3c3c" strokeWidth="1.400" />
          </svg>
        }
      />
    </TabStrip>
    <div className="flex h-8 shrink-0 items-stretch border-b-2 border-[#232323] bg-[#3c3c3c]">
      <button className="pl-1.5 pr-2">Clear</button>
      <button className="my-1.5 border-l border-[#232323] px-1.5" aria-label="Clear options">
        <Caret className="h-2 w-[11px]" />
      </button>
      <button className="border-x-2 border-[#232323] bg-[#505050] px-1.5">Collapse</button>
      <div className="flex-1" />
      <button className="flex w-12 items-center gap-1 border-l-2 border-[#232323] bg-[#505050] pl-2" aria-label="Messages">
        <BubbleIcon className="size-5" />1
      </button>
      <button className="flex w-[51px] items-center gap-1 border-l-2 border-[#232323] pl-[7px]" aria-label="Warnings">
        <WarnIcon />0
      </button>
      <button className="flex w-[53px] items-center gap-1 border-l-2 border-[#232323] pl-[7px]" aria-label="Errors">
        <ErrorIcon />0
      </button>
    </div>
    <div className="min-h-0 flex-[368] overflow-hidden border-b-2 border-[#1c1c1c]">
      <div className="relative flex h-12 gap-1.5 pl-[14px]">
        <BubbleIcon className="mt-1.5 h-[43px] w-10" />
        <p className="mt-1 whitespace-nowrap leading-6">[12:51:25] There are 2 audio listeners in the scene. Please ensure there is always exactly one audio listener in the scene.</p>
        <span className="absolute right-2 top-4 h-6 rounded-full bg-[#5c5c5c] px-2.5 leading-6 text-[#d0d0d0]">3738</span>
      </div>
    </div>
    <div className="flex-[158]" />
  </section>
);

const StatusBar = () => (
  <footer className="flex h-[33px] shrink-0 items-center justify-between bg-[#141414] pl-[3px]">
    <div className="flex items-center gap-1.5">
      <BubbleIcon className="size-[21px]" />
      There are 2 audio listeners in the scene. Please ensure there is always exactly one audio listener in the scene.
    </div>
    <div className="flex items-center">
      <button className="flex h-7 w-[38px] items-center justify-center border-l-2 border-[#242424]" aria-label="Debugger">
        <Line className="size-[22px]">
          <path d="M8 1.500l1 3.500M16 1.500L15 5M7 9L3 7M17 9l4-2M6 13.500H1M18 13.500h5M7 17l-4 3M17 17l4 3" />
          <ellipse cx="12" cy="13" rx="6.500" ry="9.500" fill="currentColor" stroke="none" />
          <path d="M3 1l20 22" stroke="#141414" strokeWidth="3" />
          <path d="M1 1l20 22" />
        </Line>
      </button>
      <button className="flex h-7 w-[39px] items-center justify-center border-l-2 border-[#242424]" aria-label="Cache server">
        <Line className="size-[22px]">
          <path d="M3 5q9-6 18 0v2q-9 5-18 0zM3 10q9 5 18 0v3q-9 5-18 0zM3 16q9 5 18 0v3q-9 6-18 0z" fill="currentColor" stroke="none" />
          <path d="M4 1l20 22" stroke="#141414" strokeWidth="3" />
          <path d="M2 1l20 22" />
        </Line>
      </button>
      <button className="flex h-7 w-10 items-center justify-center border-l-2 border-[#242424]" aria-label="Auto generate lighting">
        <Line className="size-[22px]">
          <circle cx="12" cy="12" r="10.500" />
          <path d="M7.500 12l3.500 3.500L16.500 9" />
        </Line>
      </button>
    </div>
  </footer>
);

const App = () => {
  return (
    <div className="relative flex h-screen flex-col overflow-hidden bg-[#141414] font-['Inter','Noto_Sans_CJK_SC',sans-serif] text-lg/6 text-[#c4c4c4]">
      <TitleBar />
      <MenuBar />
      <MainToolbar />
      <main className="grid min-h-0 flex-1 grid-cols-[minmax(0,1952fr)_minmax(0,605fr)] gap-x-[3px]">
        <div className="grid min-h-0 grid-rows-[minmax(0,744fr)_minmax(0,702fr)] gap-y-[3px]">
          <div className="grid min-h-0 grid-cols-[minmax(0,505fr)_minmax(0,1444fr)] gap-x-[3px]">
            <Hierarchy />
            <Scene />
          </div>
          <Project />
        </div>
        <div className="grid min-h-0 grid-rows-[minmax(0,851fr)_minmax(0,595fr)] gap-y-[3px]">
          <Inspector />
          <Console />
        </div>
      </main>
      <StatusBar />
      <p className="pointer-events-none absolute bottom-3 right-2 font-['Open_Sans','Noto_Sans_CJK_SC',sans-serif] text-[50px]/[64px] text-[#c6c6c6] drop-shadow-sm">CSDN @南無忘码至尊</p>
    </div>
  );
};

export default App;
